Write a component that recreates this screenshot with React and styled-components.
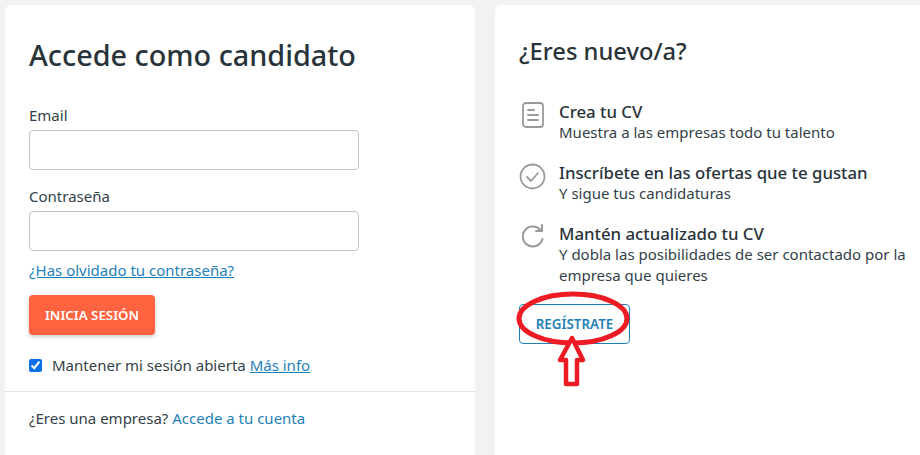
import React from "react";
import styled, { createGlobalStyle } from "styled-components";

const GlobalStyle = createGlobalStyle`
  html, body {
    margin: 0;
    padding: 0;
    height: 455px;
    overflow: hidden;
    background: #f2f2f2;
    font-family: "Noto Sans", "Open Sans", sans-serif;
    color: #333f48;
  }
`;

const Page = styled.div`
  display: flex;
  gap: 20px;
  width: 960px;
  height: 455px;
  padding: 5px 0 0 5px;
  box-sizing: border-box;
`;

const Card = styled.section`
  background: #fff;
  border-radius: 6px 6px 0 0;
  height: 470px;
  box-sizing: border-box;
  flex: none;
  width: ${(props) => props.$width}px;
`;

const LoginBody = styled.div`
  padding: 31px 24px 0;
`;

const Title = styled.h1`
  margin: 0 0 31px;
  font-size: 28.8px;
  line-height: 38px;
  font-weight: 500;
  color: #29333a;
`;

const Field = styled.div`
  margin-bottom: ${(props) => props.$gap}px;
`;

const Label = styled.label`
  display: block;
  font-size: 15px;
  line-height: 20px;
  margin-bottom: 5px;
  color: #333f48;
`;

const Input = styled.input`
  display: block;
  width: 330px;
  height: 40px;
  box-sizing: border-box;
  border: 1px solid #c4c4c4;
  border-radius: 4px;
  background: #fff;
`;

const Link = styled.a`
  color: #1f7fb8;
  font-size: 15px;
  text-decoration: ${(props) => (props.$underline ? "underline" : "none")};
`;

const ForgotRow = styled.div`
  line-height: 20px;
`;

const SubmitButton = styled.button`
  display: block;
  margin-top: 15px;
  width: 126px;
  height: 40px;
  border: none;
  border-radius: 4px;
  background: #ff6340;
  color: #fff;
  font-family: inherit;
  font-size: 13.3px;
  font-weight: 600;
  box-shadow: 0 2px 4px rgba(0, 0, 0, 0.2);
`;

const KeepRow = styled.div`
  display: flex;
  align-items: center;
  gap: 10px;
  margin-top: 20px;
  font-size: 15px;
  line-height: 20px;
`;

const Check = styled.input`
  width: 13px;
  height: 13px;
  margin: 0;
  accent-color: #0b6fe8;
`;

const Divider = styled.hr`
  border: none;
  border-top: 1px solid #e2e2e2;
  margin: 16px 0 0;
`;

const CompanyRow = styled.div`
  padding: 16px 24px 0;
  font-size: 15px;
  line-height: 20px;
`;

const RegisterBody = styled.div`
  position: relative;
  padding: 31px 24px 0;
`;

const SubTitle = styled.h2`
  margin: 0 0 36px;
  font-size: 23.7px;
  line-height: 30px;
  font-weight: 500;
  color: #29333a;
`;

const Benefits = styled.div`
  display: flex;
  flex-direction: column;
  gap: 20px;
`;

const Benefit = styled.div`
  display: flex;
  gap: 13px;
`;

const IconBox = styled.div`
  width: 27px;
  flex: none;
  display: flex;
  justify-content: center;
`;

const BenefitText = styled.div`
  width: 352px;
  font-size: 15px;
  line-height: 21px;
`;

const BenefitTitle = styled.div`
  font-size: 16.8px;
  line-height: 20px;
  font-weight: 500;
  color: #29333a;
`;

const RegisterButton = styled.button`
  display: block;
  margin-top: 18px;
  width: 111px;
  height: 40px;
  background: #fff;
  border: 1px solid #1f7fb8;
  border-radius: 4px;
  color: #1f7fb8;
  font-family: inherit;
  font-size: 13.4px;
  font-weight: 600;
`;

const Annotation = styled.svg`
  position: absolute;
  left: 17px;
  top: 283px;
`;

const DocIcon = () => (
  <svg width="22" height="26" viewBox="0 0 22 26" fill="none" stroke="#9a9a9a" strokeWidth="1.8" strokeLinecap="round">
    <rect x="1" y="1" width="20" height="24" rx="3" />
    <path d="M6 8h6M6 13h10M6 18h10" />
  </svg>
);

const CheckIcon = () => (
  <svg width="27" height="27" viewBox="0 0 27 27" fill="none" stroke="#9a9a9a" strokeWidth="1.8" strokeLinecap="round" strokeLinejoin="round">
    <circle cx="13.5" cy="13.5" r="12" />
    <path d="M8 14l4 4 7-8" />
  </svg>
);

const RefreshIcon = () => (
  <svg width="22" height="24" viewBox="0 0 22 24" fill="none" stroke="#9a9a9a" strokeWidth="2" strokeLinecap="round" strokeLinejoin="round">
    <path d="M18 5.5A10 10 0 1 0 20.5 15" />
    <path d="M20 1v6h-6" />
  </svg>
);

export default function App() {
  return (
    <>
      <GlobalStyle />
      <Page>
        <Card $width={470}>
          <LoginBody>
            <Title>Accede como candidato</Title>
            <Field $gap={16}>
              <Label>Email</Label>
              <Input type="text" />
            </Field>
            <Field $gap={9}>
              <Label>Contraseña</Label>
              <Input type="password" />
            </Field>
            <ForgotRow>
              <Link $underline href="#">¿Has olvidado tu contraseña?</Link>
            </ForgotRow>
            <SubmitButton>INICIA SESIÓN</SubmitButton>
            <KeepRow>
              <Check type="checkbox" defaultChecked />
              <span>
                Mantener mi sesión abierta <Link $underline href="#">Más info</Link>
              </span>
            </KeepRow>
          </LoginBody>
          <Divider />
          <CompanyRow>
            ¿Eres una empresa? <Link href="#">Accede a tu cuenta</Link>
          </CompanyRow>
        </Card>
        <Card $width={470}>
          <RegisterBody>
            <SubTitle>¿Eres nuevo/a?</SubTitle>
            <Benefits>
              <Benefit>
                <IconBox><DocIcon /></IconBox>
                <BenefitText>
                  <BenefitTitle>Crea tu CV</BenefitTitle>
                  Muestra a las empresas todo tu talento
                </BenefitText>
              </Benefit>
              <Benefit>
                <IconBox><CheckIcon /></IconBox>
                <BenefitText>
                  <BenefitTitle>Inscríbete en las ofertas que te gustan</BenefitTitle>
                  Y sigue tus candidaturas
                </BenefitText>
              </Benefit>
              <Benefit>
                <IconBox><RefreshIcon /></IconBox>
                <BenefitText>
                  <BenefitTitle>Mantén actualizado tu CV</BenefitTitle>
                  Y dobla las posibilidades de ser contactado por la empresa que quieres
                </BenefitText>
              </Benefit>
            </Benefits>
            <RegisterButton>REGÍSTRATE</RegisterButton>
            <Annotation width="124" height="105" viewBox="0 0 124 105" fill="none" stroke="#ed1c24">
              <ellipse cx="61" cy="30.5" rx="54" ry="24.5" strokeWidth="5" />
              <path d="M60 50 L71 72 H65 V96 H54 V72 H48 Z" strokeWidth="4.5" strokeLinejoin="round" fill="#fff" />
            </Annotation>
          </RegisterBody>
        </Card>
      </Page>
    </>
  );
}
